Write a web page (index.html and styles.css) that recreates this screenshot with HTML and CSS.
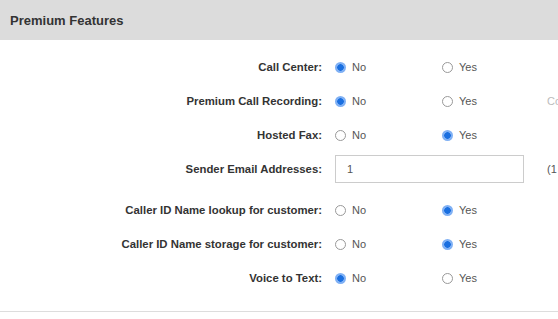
FILE: index.html
```html
<!DOCTYPE html>
<html lang="en">
<head>
<meta charset="UTF-8" />
<title>Premium Features</title>
<link rel="stylesheet" href="styles.css">
</head>
<body>

<section class="panel">
  <div class="panel-head">Premium Features</div>
  <div class="panel-body">

    <div class="row">
      <label class="field-label">Call Center:</label>
      <label class="opt"><input type="radio" name="cc" checked> No</label>
      <label class="opt"><input type="radio" name="cc"> Yes</label>
    </div>

    <div class="row">
      <label class="field-label">Premium Call Recording:</label>
      <label class="opt"><input type="radio" name="pcr" checked> No</label>
      <label class="opt"><input type="radio" name="pcr"> Yes</label>
      <span class="note faded">Co</span>
    </div>

    <div class="row">
      <label class="field-label">Hosted Fax:</label>
      <label class="opt"><input type="radio" name="fax"> No</label>
      <label class="opt"><input type="radio" name="fax" checked> Yes</label>
    </div>

    <div class="row row-input">
      <label class="field-label">Sender Email Addresses:</label>
      <input class="text-input" type="text" value="1">
      <span class="note">(1</span>
    </div>

    <div class="row">
      <label class="field-label">Caller ID Name lookup for customer:</label>
      <label class="opt"><input type="radio" name="cnl"> No</label>
      <label class="opt"><input type="radio" name="cnl" checked> Yes</label>
    </div>

    <div class="row">
      <label class="field-label">Caller ID Name storage for customer:</label>
      <label class="opt"><input type="radio" name="cns"> No</label>
      <label class="opt"><input type="radio" name="cns" checked> Yes</label>
    </div>

    <div class="row">
      <label class="field-label">Voice to Text:</label>
      <label class="opt"><input type="radio" name="vtt" checked> No</label>
      <label class="opt"><input type="radio" name="vtt"> Yes</label>
    </div>

  </div>
</section>

</body>
</html>
```

FILE: styles.css
```css
/* Base */
*, *::before, *::after {
  box-sizing: border-box;
}
body {
  margin: 0;
  font-family: "Liberation Sans", Arial, sans-serif;
  font-size: 11px;
  color: #555;
  background: #fff;
  overflow: hidden;
}

/* Panel */
.panel {
  width: 100%;
}
.panel-head {
  height: 40px;
  background: #dcdcdc;
  padding: 0 10px;
  display: flex;
  align-items: center;
  font-size: 13px;
  font-weight: 700;
  color: #333;
}
.panel-body {
  padding: 10px 0 16px;
  border-bottom: 1px solid #ddd;
}

/* Rows */
.row {
  display: grid;
  grid-template-columns: 335px 107px 105px auto;
  align-items: center;
  height: 34px;
  white-space: nowrap;
}
.row-input {
  height: 41px;
  align-items: start;
  padding-top: 3px;
}
.row-input .field-label,
.row-input .note {
  line-height: 28px;
}
.field-label {
  grid-column: 1;
  margin-right: 13px;
  text-align: right;
  font-size: 11.35px;
  font-weight: 700;
  color: #333;
}

/* Radio options */
.opt {
  display: flex;
  align-items: center;
  gap: 6px;
  color: #555;
}
.opt input {
  appearance: none;
  -webkit-appearance: none;
  margin: 0;
  width: 11px;
  height: 11px;
  border: 1px solid #999;
  border-radius: 50%;
  background: #fff;
}
.opt input:checked {
  border: none;
  background: radial-gradient(circle, #1a6fe0 0 3px, #7fb0f4 3.5px 5.5px);
}

/* Text input */
.text-input {
  grid-column: 2 / span 2;
  width: 189px;
  height: 28px;
  border: 1px solid #ccc;
  padding: 0 11px;
  font-family: inherit;
  font-size: 11px;
  color: #555;
}

/* Right-hand notes */
.note {
  grid-column: 4;
  color: #555;
}
.faded {
  color: #bbb;
}
```
